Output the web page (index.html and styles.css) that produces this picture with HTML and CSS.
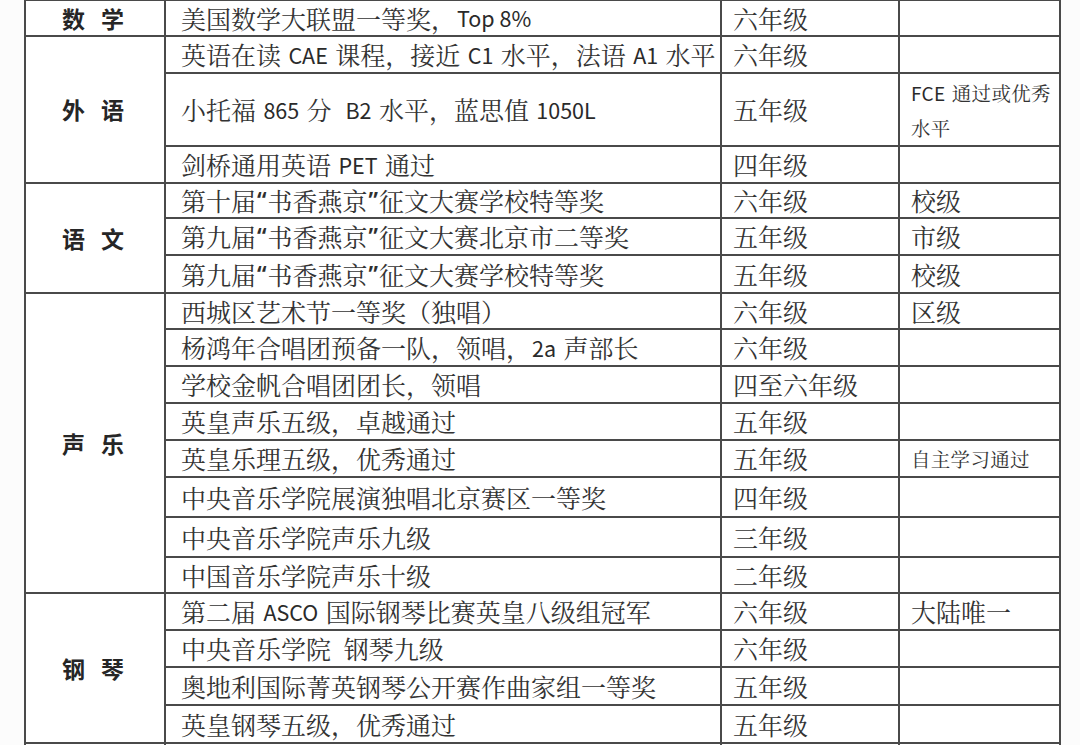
FILE: index.html
```html
<!DOCTYPE html>
<html lang="zh-CN">
<head>
<meta charset="utf-8">
<title>获奖情况</title>
<link rel="stylesheet" href="styles.css">
</head>
<body>
<div class="sheet">
  <div class="cat">数 学</div>
  <div class="item">美国数学大联盟一等奖，<span class="en">Top 8%</span></div>
  <div class="grade">六年级</div>
  <div class="note"></div>

  <div class="cat span3">外 语</div>
  <div class="item">英语在读 <span class="en">CAE</span> 课程，接近 <span class="en">C1</span> 水平，法语 <span class="en">A1</span> 水平</div>
  <div class="grade">六年级</div>
  <div class="note"></div>
  <div class="item">小托福 <span class="en">865</span> 分  <span class="en">B2</span> 水平，蓝思值 <span class="en">1050L</span></div>
  <div class="grade">五年级</div>
  <div class="note small"><span class="en">FCE</span> 通过或优秀<br>水平</div>
  <div class="item">剑桥通用英语 <span class="en">PET</span> 通过</div>
  <div class="grade">四年级</div>
  <div class="note"></div>

  <div class="cat span3">语 文</div>
  <div class="item">第十届<span class="q">“</span>书香燕京<span class="q">”</span>征文大赛学校特等奖</div>
  <div class="grade">六年级</div>
  <div class="note">校级</div>
  <div class="item">第九届<span class="q">“</span>书香燕京<span class="q">”</span>征文大赛北京市二等奖</div>
  <div class="grade">五年级</div>
  <div class="note">市级</div>
  <div class="item">第九届<span class="q">“</span>书香燕京<span class="q">”</span>征文大赛学校特等奖</div>
  <div class="grade">五年级</div>
  <div class="note">校级</div>

  <div class="cat span8">声 乐</div>
  <div class="item">西城区艺术节一等奖（独唱）</div>
  <div class="grade">六年级</div>
  <div class="note">区级</div>
  <div class="item">杨鸿年合唱团预备一队，领唱，<span class="en">2a</span> 声部长</div>
  <div class="grade">六年级</div>
  <div class="note"></div>
  <div class="item">学校金帆合唱团团长，领唱</div>
  <div class="grade">四至六年级</div>
  <div class="note"></div>
  <div class="item">英皇声乐五级，卓越通过</div>
  <div class="grade">五年级</div>
  <div class="note"></div>
  <div class="item">英皇乐理五级，优秀通过</div>
  <div class="grade">五年级</div>
  <div class="note small">自主学习通过</div>
  <div class="item">中央音乐学院展演独唱北京赛区一等奖</div>
  <div class="grade">四年级</div>
  <div class="note"></div>
  <div class="item">中央音乐学院声乐九级</div>
  <div class="grade">三年级</div>
  <div class="note"></div>
  <div class="item">中国音乐学院声乐十级</div>
  <div class="grade">二年级</div>
  <div class="note"></div>

  <div class="cat span4">钢 琴</div>
  <div class="item">第二届 <span class="en">ASCO</span> 国际钢琴比赛英皇八级组冠军</div>
  <div class="grade">六年级</div>
  <div class="note">大陆唯一</div>
  <div class="item">中央音乐学院  钢琴九级</div>
  <div class="grade">六年级</div>
  <div class="note"></div>
  <div class="item">奥地利国际菁英钢琴公开赛作曲家组一等奖</div>
  <div class="grade">五年级</div>
  <div class="note"></div>
  <div class="item">英皇钢琴五级，优秀通过</div>
  <div class="grade">五年级</div>
  <div class="note"></div>

  <div class="cat"></div>
  <div class="item"></div>
  <div class="grade"></div>
  <div class="note"></div>
</div>
</body>
</html>
```

FILE: styles.css
```css
html, body {
  margin: 0;
  padding: 0;
  overflow: hidden;
  background: #fcfcfc;
}

body {
  width: 1080px;
  height: 745px;
  font-family: "Noto Serif CJK SC", "Noto Sans CJK SC", serif;
  color: #333;
}

.sheet {
  display: grid;
  grid-template-columns: 140px 556px 178px 161px;
  grid-template-rows: 36px 37px 73px 37px 35px 37px 38px 36px 37px 37px 37px 37px 40px 40px 36px 37px 37px 38px 38px 37px;
  width: 1037px;
  margin: -1px 0 0 24px;
  border-left: 2px solid #4a4a4a;
  border-top: 2px solid #4a4a4a;
  box-sizing: border-box;
  background: #fff;
}

.sheet > div {
  border-right: 2px solid #4a4a4a;
  border-bottom: 2px solid #4a4a4a;
  box-sizing: border-box;
  display: flex;
  align-items: center;
  white-space: pre;
  font-size: 25px;
  font-weight: 400;
  word-spacing: 0;
  line-height: 1;
}

.en {
  font-family: "Noto Sans CJK SC", "Noto Sans", sans-serif;
  font-size: 21.5px;
  font-weight: 400;
  color: #2a2a2a;
  margin: 0 1px;
}

.q {
  font-family: "Noto Sans", "Liberation Sans", sans-serif;
  font-size: 23px;
  font-weight: 600;
  letter-spacing: 1px;
  color: #2e2e2e;
  margin-left: 1px;
}

.sheet > .cat {
  justify-content: center;
  font-family: "Noto Sans CJK SC", sans-serif;
  font-weight: 700;
  font-size: 23px;
  color: #262626;
  word-spacing: 11px;
  padding-right: 4px;
}

.span3 { grid-row: span 3; }
.span4 { grid-row: span 4; }
.span8 { grid-row: span 8; }

.sheet > .item {
  padding-left: 15px;
}

.sheet > .grade {
  padding-left: 11px;
}

.sheet > .note {
  padding-left: 11px;
}

.sheet > .note.small {
  display: block;
  padding-top: 1px;
  font-size: 19.5px;
  line-height: 35px;
  letter-spacing: 0.3px;
  word-spacing: 1px;
}

.note.small .en {
  font-size: 19px;
  margin: 0;
}

.sheet > .note.small {
  align-content: center;
}
```
